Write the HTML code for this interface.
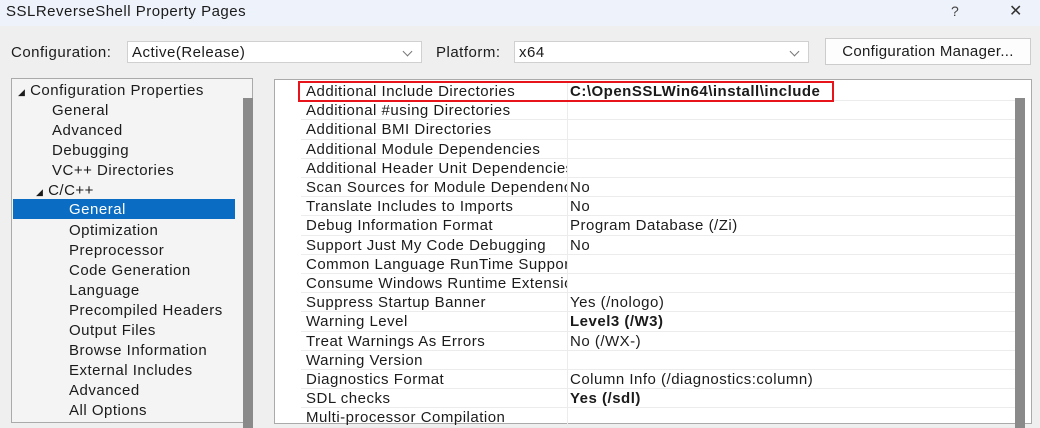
<!DOCTYPE html>
<html><head><style>
body{margin:0;width:1040px;height:417px;overflow:hidden;background:#efefef;font-family:"Liberation Sans",sans-serif;font-size:15px;letter-spacing:0.5px;color:#1b1b1b;position:relative}
.abs{position:absolute}
.title{left:0;top:0;width:1040px;height:26px;background:#eef2fa}
.combo{background:#fff;border:1px solid #d0d0d0;height:22px;line-height:22px;padding-left:4px;box-sizing:border-box}
.chev{position:absolute;right:10px;top:6px;width:6px;height:6px;border-right:1px solid #777;border-bottom:1px solid #777;transform:rotate(45deg)}
.tree{left:11px;top:78px;width:242px;height:345px;background:#f4f4f4;border:1px solid #aaa;box-sizing:border-box}
.ti{position:absolute;height:20px;line-height:22px;white-space:nowrap}
.grid{left:274px;top:79px;width:758px;height:345px;background:#fff;border:1px solid #aaa;box-sizing:border-box}
.row{position:absolute;left:26px;width:714px;height:19.2px;border-bottom:1px solid #ececec;box-sizing:border-box;line-height:20px}
.row .n{position:absolute;left:5px;width:261px;overflow:hidden;white-space:nowrap}
.row .v{position:absolute;left:269px;white-space:nowrap}
.row .sep{position:absolute;left:266px;top:0;bottom:0;width:1px;background:#ececec}
b{font-weight:bold}
</style></head><body>
<div class="abs title"></div>
<div class="abs" style="left:6px;top:3px">SSLReverseShell Property Pages</div>
<div class="abs" style="left:951px;top:3px;color:#444;font-size:14px">?</div>
<div class="abs" style="left:1009px;top:1px;font-size:16px;color:#333">✕</div>
<div class="abs" style="left:11px;top:44px">Configuration:</div>
<div class="abs combo" style="left:127px;top:41px;width:295px">Active(Release)<span class="chev"></span></div>
<div class="abs" style="left:436px;top:44px">Platform:</div>
<div class="abs combo" style="left:514px;top:41px;width:295px">x64<span class="chev"></span></div>
<div class="abs" style="left:825px;top:38px;width:206px;height:27px;background:#fdfdfd;border:1px solid #ccc;box-sizing:border-box;text-align:center;line-height:25px;letter-spacing:0.3px">Configuration Manager...</div>
<div class="abs tree">
<div class="abs" style="left:1px;top:120px;width:222px;height:20px;background:#0a6cc2"></div>
<div class="abs" style="left:231px;top:19px;width:10px;height:330px;background:#8a8a8a"></div>
<div class="ti" style="left:6px;top:1px"><span style="font-size:9px">◢</span> Configuration Properties</div>
<div class="ti" style="left:40px;top:21px">General</div>
<div class="ti" style="left:40px;top:41px">Advanced</div>
<div class="ti" style="left:40px;top:61px">Debugging</div>
<div class="ti" style="left:40px;top:81px">VC++ Directories</div>
<div class="ti" style="left:24px;top:101px"><span style="font-size:9px">◢</span> C/C++</div>
<div class="ti" style="left:57px;top:120px;color:#fff">General</div>
<div class="ti" style="left:57px;top:141px">Optimization</div>
<div class="ti" style="left:57px;top:161px">Preprocessor</div>
<div class="ti" style="left:57px;top:181px">Code Generation</div>
<div class="ti" style="left:57px;top:201px">Language</div>
<div class="ti" style="left:57px;top:221px">Precompiled Headers</div>
<div class="ti" style="left:57px;top:241px">Output Files</div>
<div class="ti" style="left:57px;top:261px">Browse Information</div>
<div class="ti" style="left:57px;top:281px">External Includes</div>
<div class="ti" style="left:57px;top:301px">Advanced</div>
<div class="ti" style="left:57px;top:321px">All Options</div>
</div>
<div class="abs grid">
<div class="abs" style="left:740px;top:18px;width:10px;height:330px;background:#8a8a8a"></div>
<div class="row" style="top:2px"><div class="sep"></div><span class="n">Additional Include Directories</span><span class="v"><b>C:\OpenSSLWin64\install\include</b></span></div>
<div class="row" style="top:21.2px"><div class="sep"></div><span class="n">Additional #using Directories</span></div>
<div class="row" style="top:40.4px"><div class="sep"></div><span class="n">Additional BMI Directories</span></div>
<div class="row" style="top:59.6px"><div class="sep"></div><span class="n">Additional Module Dependencies</span></div>
<div class="row" style="top:78.8px"><div class="sep"></div><span class="n">Additional Header Unit Dependencies</span></div>
<div class="row" style="top:98px"><div class="sep"></div><span class="n">Scan Sources for Module Dependencies</span><span class="v">No</span></div>
<div class="row" style="top:117.2px"><div class="sep"></div><span class="n">Translate Includes to Imports</span><span class="v">No</span></div>
<div class="row" style="top:136.4px"><div class="sep"></div><span class="n">Debug Information Format</span><span class="v">Program Database (/Zi)</span></div>
<div class="row" style="top:155.6px"><div class="sep"></div><span class="n">Support Just My Code Debugging</span><span class="v">No</span></div>
<div class="row" style="top:174.8px"><div class="sep"></div><span class="n">Common Language RunTime Support</span></div>
<div class="row" style="top:194px"><div class="sep"></div><span class="n">Consume Windows Runtime Extension</span></div>
<div class="row" style="top:213.2px"><div class="sep"></div><span class="n">Suppress Startup Banner</span><span class="v">Yes (/nologo)</span></div>
<div class="row" style="top:232.4px"><div class="sep"></div><span class="n">Warning Level</span><span class="v"><b>Level3 (/W3)</b></span></div>
<div class="row" style="top:251.6px"><div class="sep"></div><span class="n">Treat Warnings As Errors</span><span class="v">No (/WX-)</span></div>
<div class="row" style="top:270.8px"><div class="sep"></div><span class="n">Warning Version</span></div>
<div class="row" style="top:290px"><div class="sep"></div><span class="n">Diagnostics Format</span><span class="v">Column Info (/diagnostics:column)</span></div>
<div class="row" style="top:309.2px"><div class="sep"></div><span class="n">SDL checks</span><span class="v"><b>Yes (/sdl)</b></span></div>
<div class="row" style="top:328.4px"><div class="sep"></div><span class="n">Multi-processor Compilation</span></div>
<div class="abs" style="left:23px;top:1px;width:536px;height:21px;border:2px solid #e8141c;box-sizing:border-box"></div>
</div>
</body></html>
